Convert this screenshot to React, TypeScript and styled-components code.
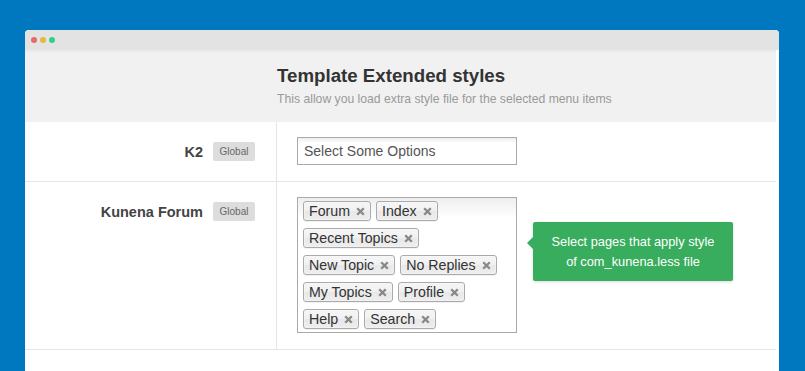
import styled, { createGlobalStyle } from 'styled-components';

const GlobalStyle = createGlobalStyle`
  html, body {
    margin: 0;
    padding: 0;
    background: #0078bf;
    font-family: 'Liberation Sans', Arial, sans-serif;
    overflow: hidden;
  }
`;

const Page = styled.div`
  display: flex;
  padding: 30px 26px 0 25px;
  height: 371px;
  box-sizing: border-box;
`;

const Window = styled.div`
  width: 754px;
  background: #fff;
  border-radius: 4px 4px 0 0;
  overflow: hidden;
`;

const TitleBar = styled.div`
  height: 20px;
  background: #e3e3e3;
  display: flex;
  align-items: center;
  gap: 3px;
  padding-left: 6px;
`;

const Dot = styled.span<{ $color: string }>`
  width: 6px;
  height: 6px;
  border-radius: 50%;
  background: ${(p) => p.$color};
`;

const Content = styled.div`
  margin-right: 3px;
`;

const Header = styled.div`
  height: 72px;
  box-sizing: border-box;
  background: #f1f1f1;
  border-top: 2px solid #ebebeb;
  display: flex;
  flex-direction: column;
  align-items: flex-start;
  padding: 13px 0 0 252px;
`;

const Title = styled.h1`
  margin: 0;
  font-size: 18.7px;
  font-weight: bold;
  color: #333;
  line-height: 22px;
`;

const Subtitle = styled.p`
  margin: 4px 0 0;
  font-size: 12.2px;
  color: #999;
  line-height: 16px;
`;

const Row = styled.div`
  display: flex;
  border-bottom: 1px solid #e5e5e5;
`;

const LabelCell = styled.div`
  width: 252px;
  flex: none;
  border-right: 1px solid #e5e5e5;
  display: flex;
  justify-content: flex-end;
  align-items: flex-start;
  padding: 20px 21px 0 0;
  box-sizing: border-box;
`;

const LabelLine = styled.div`
  display: flex;
  align-items: center;
  gap: 10px;
  height: 19px;
`;

const Label = styled.span`
  font-size: 14.5px;
  font-weight: bold;
  color: #444;
`;

const Badge = styled.span`
  background: #ddd;
  color: #666;
  font-size: 10px;
  height: 19px;
  width: 42px;
  display: flex;
  align-items: center;
  justify-content: center;
  border-radius: 2px;
`;

const FieldCell = styled.div`
  flex: 1;
  display: flex;
  align-items: flex-start;
  gap: 16px;
  padding: 15px 0 16px 20px;
`;

const SingleSelect = styled.div`
  width: 220px;
  height: 28px;
  box-sizing: border-box;
  border: 1px solid #aaa;
  background: linear-gradient(#eee 0%, #fff 20%);
  font-size: 14px;
  color: #555;
  display: flex;
  align-items: center;
  padding-left: 6px;
`;

const MultiSelect = styled.div`
  width: 220px;
  height: 136px;
  box-sizing: border-box;
  border: 1px solid #aaa;
  background: linear-gradient(#eee 0%, #fff 15%);
  display: flex;
  flex-wrap: wrap;
  align-content: flex-start;
  gap: 7px 5px;
  padding: 3px 5px;
`;

const Tag = styled.span`
  height: 20px;
  box-sizing: border-box;
  border: 1px solid #aaa;
  border-radius: 3px;
  background: linear-gradient(#f4f4f4 20%, #f0f0f0 50%, #e8e8e8 52%, #eee 100%);
  box-shadow: 0 0 2px #fff inset, 0 1px 0 rgba(0, 0, 0, 0.05);
  display: flex;
  align-items: center;
  gap: 6px;
  padding: 0 5px;
  font-size: 14.2px;
  color: #333;
`;

const Close = styled.svg`
  width: 9px;
  height: 9px;
  flex: none;
`;

const Tooltip = styled.div`
  position: relative;
  margin-top: 25px;
  width: 200px;
  height: 59px;
  box-sizing: border-box;
  background: #37ad5d;
  border-radius: 2px;
  box-shadow: 0 1px 3px rgba(0, 0, 0, 0.15);
  color: #fff;
  font-size: 12.8px;
  line-height: 20px;
  text-align: center;
  padding-top: 10px;

  &::before {
    content: '';
    position: absolute;
    left: -6px;
    top: 15px;
    border-style: solid;
    border-width: 6px 6px 6px 0;
    border-color: transparent #37ad5d transparent transparent;
  }
`;

const tags = [
  'Forum',
  'Index',
  'Recent Topics',
  'New Topic',
  'No Replies',
  'My Topics',
  'Profile',
  'Help',
  'Search',
];

const X = () => (
  <Close viewBox="0 0 9 9">
    <path d="M1.2 1.2L7.8 7.8M7.8 1.2L1.2 7.8" stroke="#888" strokeWidth="2.3" />
  </Close>
);

const App = () => {
  return (
    <Page>
      <GlobalStyle />
      <Window>
        <TitleBar>
          <Dot $color="#ea6a6a" />
          <Dot $color="#e6b83c" />
          <Dot $color="#34cf89" />
        </TitleBar>
        <Content>
          <Header>
            <Title>Template Extended styles</Title>
            <Subtitle>This allow you load extra style file for the selected menu items</Subtitle>
          </Header>
          <Row>
            <LabelCell>
              <LabelLine>
                <Label>K2</Label>
                <Badge>Global</Badge>
              </LabelLine>
            </LabelCell>
            <FieldCell>
              <SingleSelect>Select Some Options</SingleSelect>
            </FieldCell>
          </Row>
          <Row>
            <LabelCell>
              <LabelLine>
                <Label>Kunena Forum</Label>
                <Badge>Global</Badge>
              </LabelLine>
            </LabelCell>
            <FieldCell>
              <MultiSelect>
                {tags.map((t) => (
                  <Tag key={t}>
                    {t}
                    <X />
                  </Tag>
                ))}
              </MultiSelect>
              <Tooltip>
                Select pages that apply style
                <br />
                of com_kunena.less file
              </Tooltip>
            </FieldCell>
          </Row>
        </Content>
      </Window>
    </Page>
  );
};

export default App;
